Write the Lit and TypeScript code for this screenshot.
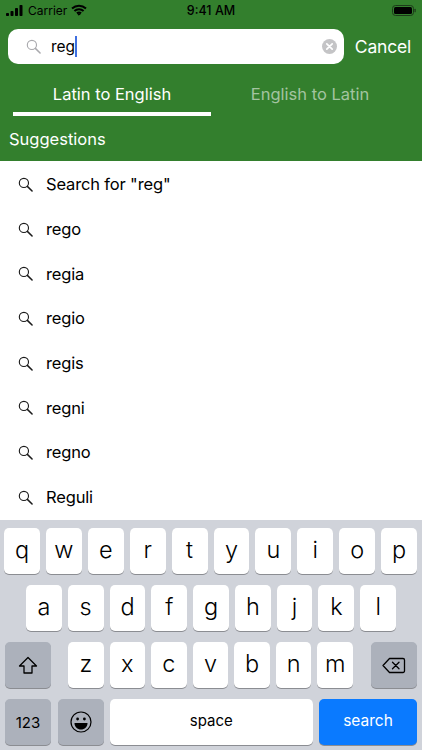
import { LitElement, html, css } from "lit";
import { customElement } from "lit/decorators.js";

const searchIcon = (cls: string) => html`<svg class=${cls} viewBox="0 0 16 16" fill="none" stroke="currentColor"><circle cx="6.3" cy="6.3" r="4.9" stroke-width="1.2"/><path d="M10 10l5 5" stroke-width="1.6" stroke-linecap="round"/></svg>`;

const rows = ['Search for "reg"', "rego", "regia", "regio", "regis", "regni", "regno", "Reguli"];

@customElement("app-root")
export class AppRoot extends LitElement {
  static styles = css`
    :host { display: block; width: 422px; height: 750px; overflow: hidden; position: relative; background: #fff; font-family: Inter, "Liberation Sans", sans-serif; color: #000; }
    .head { background: #337f2d; height: 161px; color: #fff; display: flex; flex-direction: column; }
    .status { height: 20px; display: flex; align-items: center; padding: 0 6px; color: #000; font-size: 12px; position: relative; }
    .status .left { display: flex; align-items: center; gap: 4px; flex: 1; }
    .time { position: absolute; left: 0; right: 0; text-align: center; font-weight: 500; font-size: 12.5px; }
    .searchrow { display: flex; align-items: center; padding: 9px 11px 0 8px; gap: 11px; }
    .field { flex: 1; height: 35px; background: #fff; border-radius: 10px; display: flex; align-items: center; color: #000; padding: 0 7px 0 18px; font-size: 15.5px; }
    .mag { width: 15px; height: 15px; color: #a9a9ad; margin-right: 10px; }
    .caret { display: inline-block; width: 1.5px; height: 21px; background: #3f6fe0; vertical-align: -5px; }
    .spacer { flex: 1; }
    .clear { width: 15px; height: 15px; }
    .cancel { font-size: 17.5px; letter-spacing: -0.2px; }
    .tabs { display: flex; padding-left: 13px; margin-top: 17px; }
    .tab { width: 198px; height: 31px; text-align: center; font-size: 16.5px; line-height: 27px; border-bottom: 4px solid transparent; }
    .tab.on { border-bottom-color: #fff; }
    .tab.off { color: #a3c4a0; }
    .sugg { font-size: 16.5px; padding: 9px 9px 0; line-height: 28px; }
    .list { display: flex; flex-direction: column; padding-top: 1px; }
    .row { height: 44.7px; display: flex; align-items: center; padding-left: 18px; font-size: 16.5px; letter-spacing: -0.15px; }
    .lmag { width: 15px; height: 15px; color: #1a1a1a; margin-right: 13px; flex: none; }
    .kb { position: absolute; left: 0; right: 0; top: 520px; height: 230px; background: #d0d3da; box-sizing: border-box; padding: 8px 5px 0 4px; display: flex; flex-direction: column; gap: 11px; }
    .kr { display: flex; gap: 6px; height: 46px; }
    .kr.r2 { padding: 0 21px 0 22px; }
    .kr.r3 { justify-content: space-between; padding-left: 1px; }
    .letters { display: flex; gap: 6px; flex: 1; justify-content: center; padding: 0 12px 0 11px; }
    .k { flex: 1; background: #fff; border-radius: 5px; box-shadow: 0 1px 0 #8b8d92; display: flex; align-items: center; justify-content: center; font-size: 23.5px; font-weight: 300; color: #000; padding-bottom: 3px; box-sizing: border-box; }
    .k.d { background: #acb1bb; flex: none; width: 46px; padding: 0; }
    .r4 { padding-left: 1px; gap: 6.5px; }
    .r4 .k { font-weight: 400; font-size: 15px; padding: 0 0 4px; }
    .k.space { flex: 1; }
    .k.go { flex: none; width: 98px; background: #0a7aff; color: #fff; font-size: 15.5px; }
    .r4 .k.num { font-size: 15px; padding: 0; }
    .r4 .k.emoji { padding: 0; }
  `;

  key(c: string) { return html`<div class="k">${c}</div>`; }

  render() {
    return html`
      <div class="head">
        <div class="status">
          <div class="left">
            <svg width="18" height="11" viewBox="0 0 18 11" fill="#000"><rect x="0" y="8" width="3" height="3" rx=".8"/><rect x="4.5" y="6" width="3" height="5" rx=".8"/><rect x="9" y="3" width="3" height="8" rx=".8"/><rect x="13.5" y="0" width="3" height="11" rx=".8"/></svg>
            <span>Carrier</span>
            <svg width="16" height="12" viewBox="0 0 16 12" fill="none" stroke="#000" stroke-width="2"><path d="M1 4.4C5 .7 11 .7 15 4.4"/><path d="M3.4 7C6 4.6 10 4.6 12.6 7"/><path d="M5.9 9.3c1.2-1 3-1 4.2 0" /><path d="M8 11.2l-1.3-1.3h2.6z" fill="#000" stroke-width="1"/></svg>
          </div>
          <div class="time">9:41 AM</div>
          <svg width="24" height="11" viewBox="0 0 24 11"><rect x=".5" y=".5" width="21" height="10" rx="3" fill="none" stroke="#1d3a1a"/><rect x="2" y="2" width="18" height="7" rx="1.5" fill="#000"/><rect x="22.5" y="3.7" width="1.2" height="3.6" rx=".6" fill="#1d3a1a"/></svg>
        </div>
        <div class="searchrow">
          <div class="field">
            ${searchIcon("mag")}
            <span>reg<span class="caret"></span></span>
            <span class="spacer"></span>
            <svg class="clear" viewBox="0 0 15 15"><circle cx="7.5" cy="7.5" r="7.5" fill="#c4c4c6"/><path d="M4.8 4.8l5.4 5.4M10.2 4.8l-5.4 5.4" stroke="#fff" stroke-width="1.7" stroke-linecap="round"/></svg>
          </div>
          <div class="cancel">Cancel</div>
        </div>
        <div class="tabs">
          <div class="tab on">Latin to English</div>
          <div class="tab off">English to Latin</div>
        </div>
        <div class="sugg">Suggestions</div>
      </div>
      <div class="list">
        ${rows.map((r) => html`<div class="row">${searchIcon("lmag")}<span>${r}</span></div>`)}
      </div>
      <div class="kb">
        <div class="kr">${"qwertyuiop".split("").map((c) => this.key(c))}</div>
        <div class="kr r2">${"asdfghjkl".split("").map((c) => this.key(c))}</div>
        <div class="kr r3">
          <div class="k d"><svg width="20" height="19" viewBox="0 0 20 19" fill="none" stroke="#000" stroke-width="1.3" stroke-linejoin="round"><path d="M10 1.5L1.5 10H6v7h8v-7h4.5z"/></svg></div>
          <div class="letters">${"zxcvbnm".split("").map((c) => this.key(c))}</div>
          <div class="k d"><svg width="24" height="17" viewBox="0 0 24 17" fill="none" stroke="#000" stroke-width="1.3" stroke-linejoin="round"><path d="M7.5 1.5H21a1.5 1.5 0 0 1 1.5 1.5v11a1.5 1.5 0 0 1-1.5 1.5H7.5L1 8.5z"/><path d="M10.5 5.2l6.5 6.6M17 5.2l-6.5 6.6" stroke-linecap="round"/></svg></div>
        </div>
        <div class="kr r4">
          <div class="k d num">123</div>
          <div class="k d emoji"><svg width="22" height="22" viewBox="0 0 22 22" fill="none" stroke="#000" stroke-width="1.2"><circle cx="11" cy="11" r="10"/><circle cx="7.6" cy="8" r="1.4" fill="#000" stroke="none"/><circle cx="14.4" cy="8" r="1.4" fill="#000" stroke="none"/><path d="M4.5 12h13c0 4-3 6.5-6.5 6.5S4.5 16 4.5 12z" fill="#000" stroke="none"/></svg></div>
          <div class="k space">space</div>
          <div class="k go">search</div>
        </div>
      </div>
    `;
  }
}
